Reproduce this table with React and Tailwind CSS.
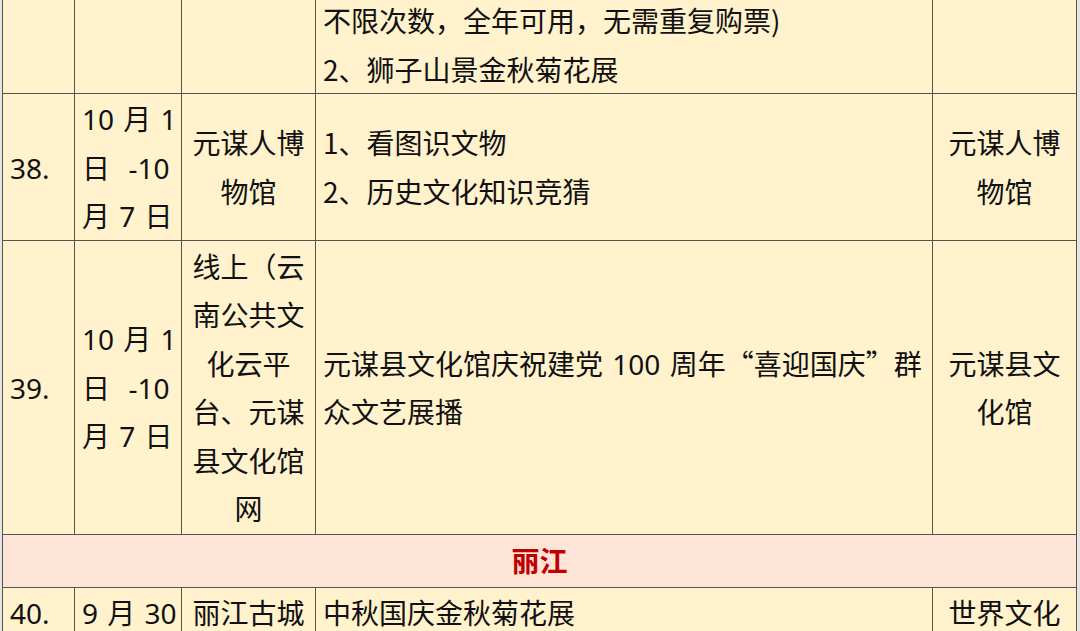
import React from "react";

const cell = "border border-[#57544c] px-[7px] py-0 align-middle";

function L({ children }) {
  return <span className="font-['Noto_Sans','Noto_Sans_CJK_SC',sans-serif] leading-none [word-spacing:2px]">{children}</span>;
}

function DateCell() {
  return (
    <>
      <L>10 </L>月<L> 1</L>
      <br />
      日<L>{"\u00a0\u00a0"}-10</L>
      <br />
      月<L> 7 </L>日
    </>
  );
}

export default function App() {
  return (
    <div className="w-[1080px] h-[631px] overflow-hidden bg-[#e4e4e4] pl-[2px] font-['Noto_Sans_CJK_SC','Noto_Sans',sans-serif] text-[28px] leading-[48.5px] text-[#111]">
      <table className="-mt-[5px] w-[1074px] table-fixed border-collapse bg-[#fff2cc]">
        <colgroup>
          <col className="w-[72px]" />
          <col className="w-[107px]" />
          <col className="w-[134px]" />
          <col className="w-[617px]" />
          <col className="w-[144px]" />
        </colgroup>
        <tbody>
          <tr>
            <td className={cell}></td>
            <td className={cell}></td>
            <td className={cell}></td>
            <td className={cell}>
              不限次数，全年可用，无需重复购票)
              <br />
              2、狮子山景金秋菊花展
            </td>
            <td className={cell}></td>
          </tr>
          <tr>
            <td className={cell}><L>38.</L></td>
            <td className={cell + " whitespace-nowrap"}>
              <DateCell />
            </td>
            <td className={cell + " text-center"}>
              元谋人博
              <br />
              物馆
            </td>
            <td className={cell}>
              1、看图识文物
              <br />
              2、历史文化知识竞猜
            </td>
            <td className={cell + " text-center"}>
              元谋人博
              <br />
              物馆
            </td>
          </tr>
          <tr className="h-[294px]">
            <td className={cell}><L>39.</L></td>
            <td className={cell + " whitespace-nowrap"}>
              <DateCell />
            </td>
            <td className={cell + " text-center whitespace-nowrap"}>
              线上（云
              <br />
              南公共文
              <br />
              化云平
              <br />
              台、元谋
              <br />
              县文化馆
              <br />
              网
            </td>
            <td className={cell + " whitespace-nowrap"}>
              元谋县文化馆庆祝建党<L> 100 </L>周年“喜迎国庆”群
              <br />
              众文艺展播
            </td>
            <td className={cell + " text-center"}>
              元谋县文
              <br />
              化馆
            </td>
          </tr>
          <tr className="h-[53px] bg-[#fce4d6]">
            <td colSpan={5} className={cell + " text-center font-bold text-[#c00000]"}>
              丽江
            </td>
          </tr>
          <tr>
            <td className={cell + " align-top"}><L>40.</L></td>
            <td className={cell + " align-top whitespace-nowrap"}>
              <L>9 </L>月<L> 30</L>
            </td>
            <td className={cell + " align-top text-center whitespace-nowrap"}>丽江古城</td>
            <td className={cell + " align-top"}>中秋国庆金秋菊花展</td>
            <td className={cell + " align-top text-center whitespace-nowrap"}>世界文化</td>
          </tr>
        </tbody>
      </table>
    </div>
  );
}
